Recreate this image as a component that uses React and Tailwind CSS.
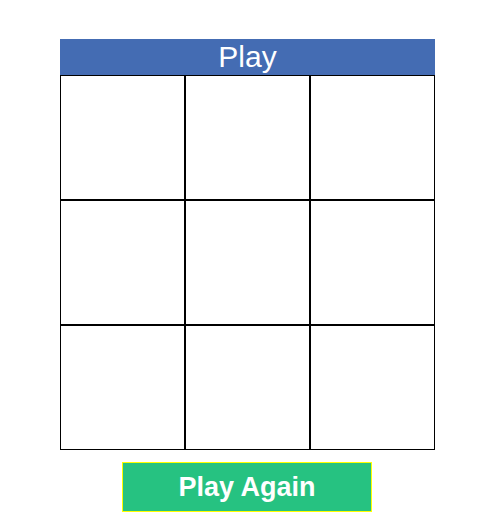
export default function App() {
  const cells = Array.from({ length: 9 });
  return (
    <div className="w-[479px] h-[529px] bg-white pt-[39px] pl-[60px]" style={{ fontFamily: '"Liberation Sans", Arial, sans-serif' }}>
      <div className="w-[375px] flex flex-col">
        <div className="h-[36px] bg-[#446cb3] text-white text-[30px] leading-[36px] text-center">Play</div>
        <div className="grid grid-cols-3 w-[375px]">
          {cells.map((_, i) => (
            <div key={i} className="h-[125px] border border-black bg-white box-border" />
          ))}
        </div>
        <div className="flex mt-[12px] pl-[62px]">
          <button className="w-[250px] h-[50px] bg-[#26c281] border border-[#ffff00] text-white font-bold text-[27px] leading-none">
            Play Again
          </button>
        </div>
      </div>
    </div>
  );
}
